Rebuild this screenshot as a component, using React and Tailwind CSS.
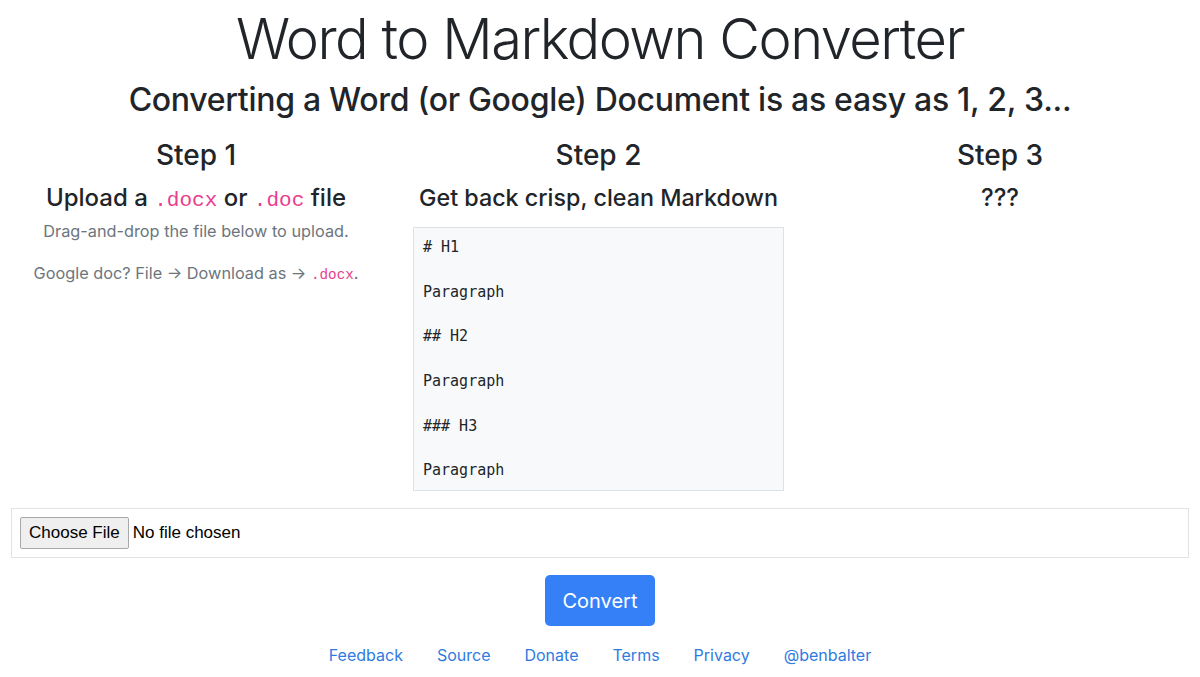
import React from 'react';

const Code = ({ children }) => (
  <code className="text-[#e83e8c] font-['Liberation_Mono',monospace] text-[0.875em]">{children}</code>
);

const App = () => {
  return (
    <div className="min-h-[677px] bg-white text-[#212529] font-['Inter',sans-serif]">
      <h1 className="text-center text-[56px] font-light leading-[1.2] pt-[6px] tracking-[-1.5px]">
        Word to Markdown Converter
      </h1>
      <h2 className="text-center text-[32px] font-medium leading-[1.2] mt-[8px] tracking-[-0.3px]">
        Converting a Word (or Google) Document is as easy as 1, 2, 3...
      </h2>

      <div className="grid grid-cols-3 mt-[19px]">
        <div className="text-center pr-[8px]">
          <h3 className="text-[28px] font-medium leading-[1.2]">Step 1</h3>
          <h4 className="text-[24px] font-medium leading-[1.2] mt-[12px]">
            Upload a <Code>.docx</Code> or <Code>.doc</Code> file
          </h4>
          <p className="text-[16.3px] text-[#6c757d] mt-[6px]">Drag-and-drop the file below to upload.</p>
          <p className="text-[16.3px] text-[#6c757d] mt-[17px]">
            Google doc? File → Download as → <Code>.docx</Code>.
          </p>
        </div>

        <div className="flex flex-col items-center pr-[3px]">
          <h3 className="text-[28px] font-medium leading-[1.2]">Step 2</h3>
          <h4 className="text-[23.3px] font-medium leading-[1.2] mt-[12px]">Get back crisp, clean Markdown</h4>
          <pre className="mt-[15px] w-[371px] h-[264px] bg-[#f8f9fa] border border-[#dee2e6] px-[9px] pt-[8px] text-[15px] leading-[22.3px] font-['DejaVu_Sans_Mono',monospace] text-[#212529]">
{`# H1

Paragraph

## H2

Paragraph

### H3

Paragraph`}
          </pre>
        </div>

        <div className="text-center">
          <h3 className="text-[28px] font-medium leading-[1.2]">Step 3</h3>
          <h4 className="text-[24px] font-medium leading-[1.2] mt-[12px]">???</h4>
        </div>
      </div>

      <div className="px-[11px]">
        <div className="mt-[17px] border border-[#e3e3e3] h-[50px] flex items-center px-[8px]">
          <div className="flex items-center font-['Liberation_Sans',sans-serif] text-[17px] text-black">
            <button className="h-[32px] px-[8px] bg-[#efefef] border border-[#a8a8a8] rounded-[2px]">Choose File</button>
            <span className="ml-[4px]">No file chosen</span>
          </div>
        </div>
      </div>

      <div className="flex justify-center mt-[17px]">
        <button className="h-[51px] w-[110px] bg-[#3580f6] text-white text-[20px] rounded-[5px]">Convert</button>
      </div>

      <div className="flex justify-center gap-[34px] mt-[17px] text-[16px] text-[#2f7bdf]">
        <a href="#">Feedback</a>
        <a href="#">Source</a>
        <a href="#">Donate</a>
        <a href="#">Terms</a>
        <a href="#">Privacy</a>
        <a href="#">@benbalter</a>
      </div>
    </div>
  );
};

export default App;
